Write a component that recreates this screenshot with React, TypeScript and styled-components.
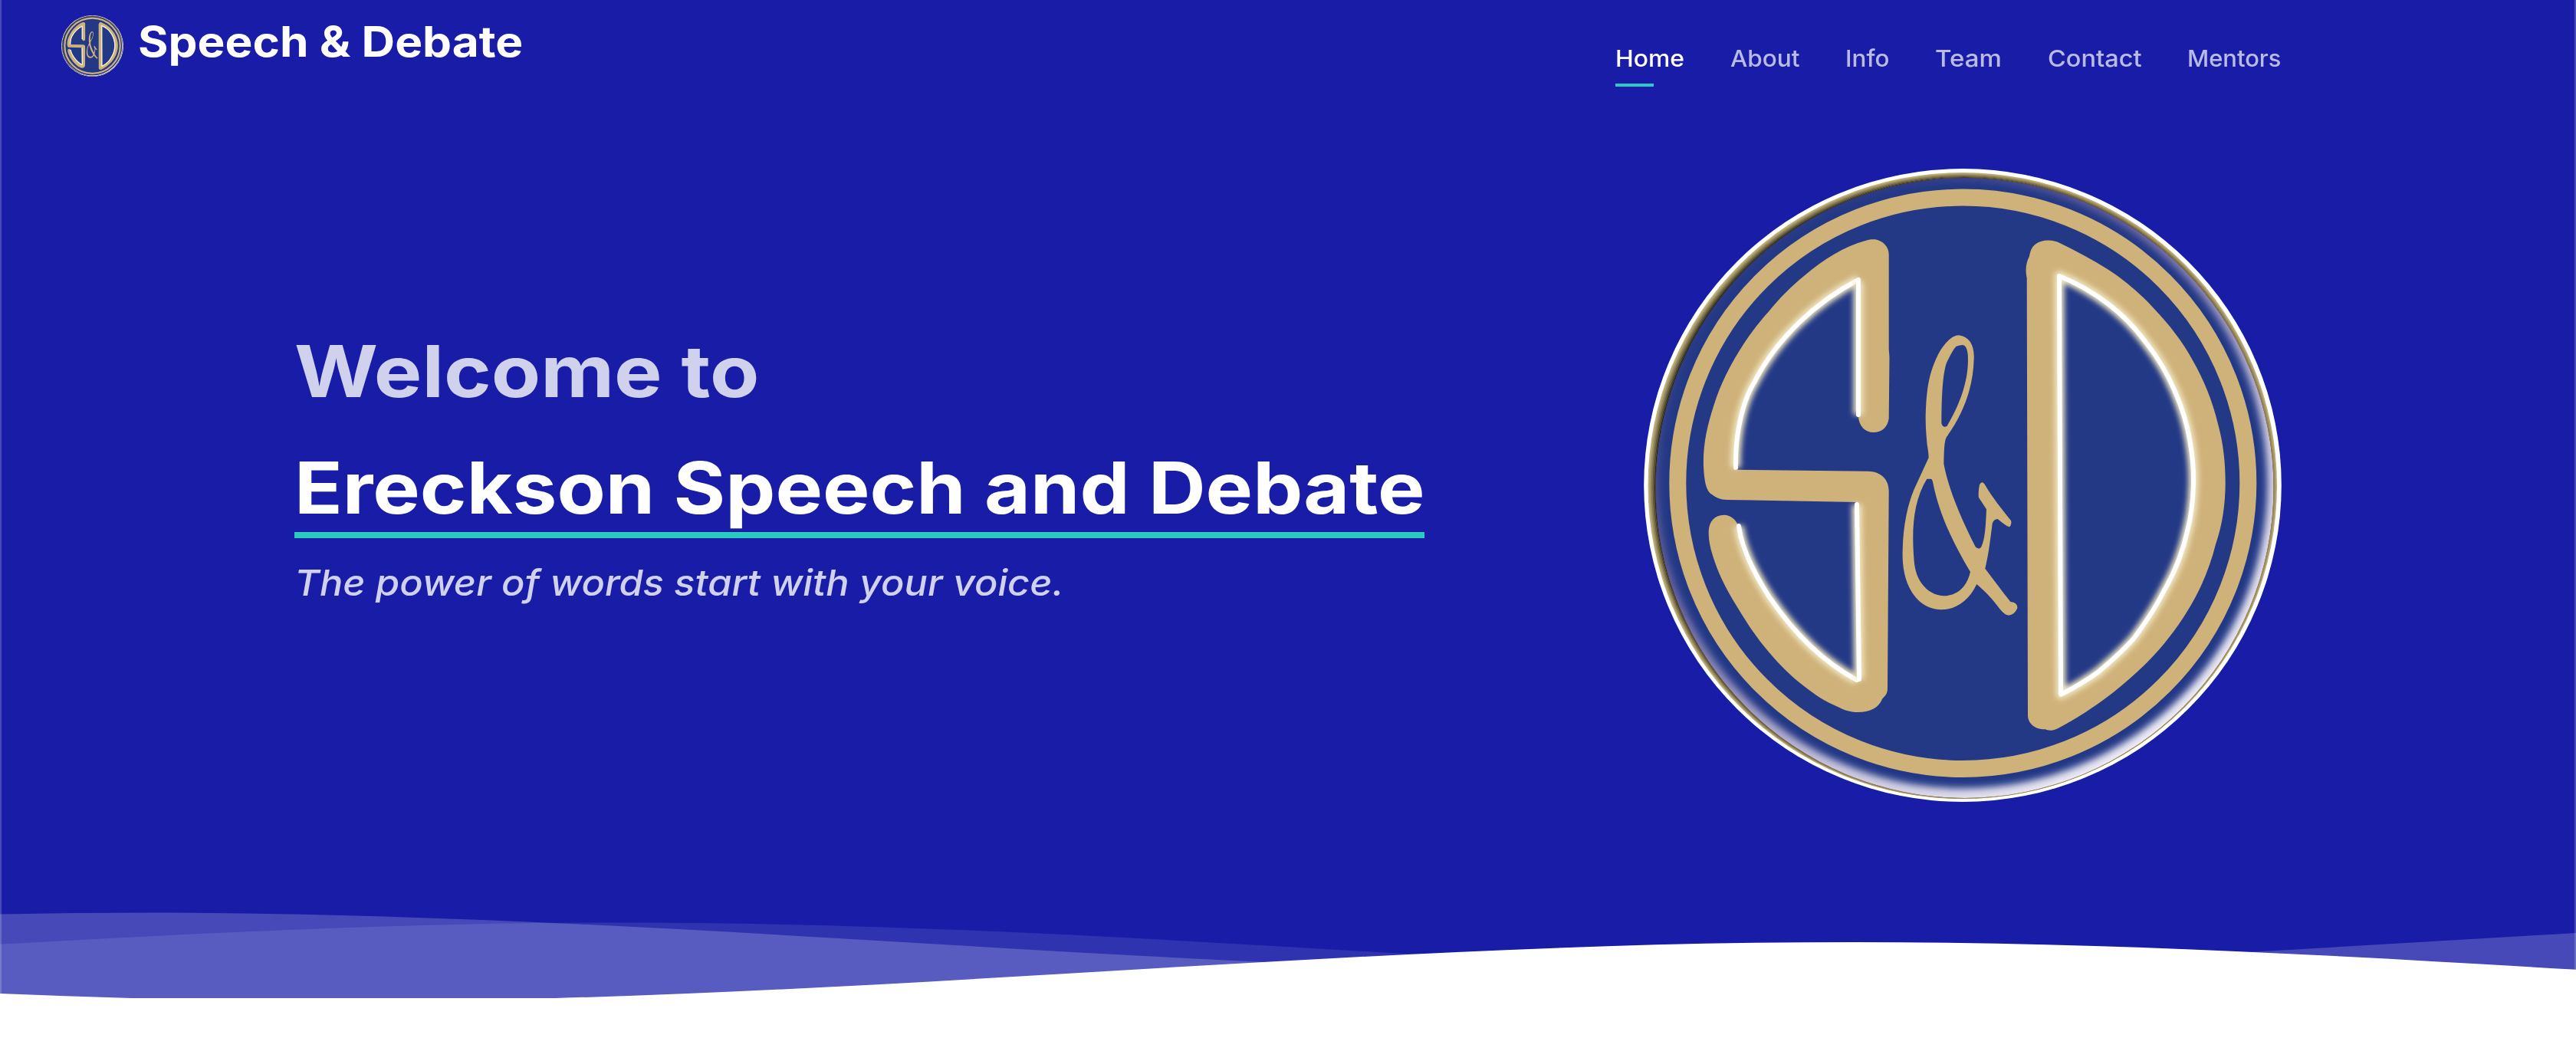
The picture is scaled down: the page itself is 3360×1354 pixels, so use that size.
import React from "react";
import styled, { createGlobalStyle } from "styled-components";

const GlobalStyle = createGlobalStyle`
  * { box-sizing: border-box; }
  body { margin: 0; background: #fff; font-family: Inter, "Open Sans", sans-serif; }
`;

const Page = styled.div`
  width: 3360px;
  height: 1354px;
  overflow: hidden;
  background: #fff;
`;

const Hero = styled.section`
  position: relative;
  display: flex;
  flex-direction: column;
  height: 1302px;
  background: #181ca6;

  &::after {
    content: "";
    position: absolute;
    inset: 0;
    border: 0 solid rgba(255, 255, 255, 0.2);
    border-width: 0 2px;
    pointer-events: none;
  }
`;

const Header = styled.header`
  display: flex;
  justify-content: space-between;
  align-items: flex-start;
  height: 140px;
  padding: 20px 385px 0 80px;
`;

const Brand = styled.a`
  display: flex;
  align-items: flex-start;
  gap: 19px;
  color: #fff;
`;

const Wide = styled.span<{ $stretch: number }>`
  display: inline-block;
  white-space: nowrap;
  transform: scaleX(${(p) => p.$stretch});
  transform-origin: left center;
`;

const BrandName = styled.span`
  font-size: 55px;
  font-weight: 700;
  line-height: 68px;
`;

const Nav = styled.nav`
  display: flex;
  gap: 60px;
  padding-top: 36px;
`;

const NavLink = styled.a<{ $width: number; $active?: boolean }>`
  width: ${(p) => p.$width}px;
  font-size: 30px;
  font-weight: 500;
  line-height: 40px;
  color: ${(p) => (p.$active ? "#fff" : "rgba(255, 255, 255, 0.7)")};

  &::after {
    content: "";
    display: block;
    width: 50px;
    height: 4px;
    margin-top: 13px;
    background: ${(p) => (p.$active ? "#2bcbbf" : "transparent")};
  }
`;

const Main = styled.main`
  flex: 1;
  display: flex;
  justify-content: space-between;
  align-items: flex-start;
  padding: 80px 384px 0;
`;

const Copy = styled.div`
  display: flex;
  flex-direction: column;
  align-items: flex-start;
  padding-top: 208px;
`;

const Title = styled.h1`
  display: flex;
  flex-direction: column;
  align-items: flex-start;
  gap: 40px;
  margin: 0;
  font-size: 93px;
  font-weight: 700;
  line-height: 112px;
  color: rgba(255, 255, 255, 0.8);
`;

const Underlined = styled.span`
  width: 1474px;
  padding-bottom: 2px;
  border-bottom: 8px solid #2bcbbf;
  color: #fff;
`;

const Tagline = styled.p`
  margin: 28px 0 0;
  font-size: 47px;
  font-weight: 500;
  font-style: italic;
  line-height: 60px;
  color: rgba(255, 255, 255, 0.8);
`;

const Emblem = styled.svg<{ $w: number; $h: number }>`
  display: block;
  flex: none;
  width: ${(p) => p.$w}px;
  height: ${(p) => p.$h}px;
`;

const Waves = styled.svg`
  display: block;
  width: 100%;
  height: 120px;
`;

const GOLD = "#cfb27a";
const NAVY = "#233985";

const S_PATH =
  "M2424 543 V363 C2424 361 2428 360 2426 363 C2412 370 2400 378 2386.7 388 C2368 402 2350 420 2333 440 C2315 460 2300 478 2286.7 500 C2278 517 2270 535 2266.7 553 C2262 575 2261 593 2262 611.7 L2267 612.7 L2436.7 614.7 C2452 615 2463.5 624 2463.7 640 L2462 898 C2462 906 2458 908 2455 912 C2450 924 2438 929 2424 929 C2412 929 2405 926 2396.7 921.7 C2380 915 2367 906 2353 895 C2336 882 2321 867 2306.7 850 C2291 832 2279 813 2266.7 793 C2254 773 2243 752 2236.7 733 C2231 716 2228.5 706 2228.7 693 C2229 680 2237 671.7 2248.7 671.7 C2258 672 2264 678 2267 685 C2267 697 2269 709 2273 720 C2282 741 2293 761 2306.7 780 C2321 801 2335 818 2353 835 C2364 846 2375 856 2386.7 865 L2421 887.7 L2424 886 L2421.7 655 L2253 652 C2244 652 2238 649 2233 645 C2226 641 2223 630 2222 608 C2221 580 2227 555 2235 530 C2242 507 2251 488 2263 467 C2276 445 2290 425 2306.7 406.7 C2321 389 2336 374 2353 360 C2380 337 2405 322 2433 314 C2438 312 2442 312 2446 312.3 C2456 314 2463.7 322 2463.7 331.7 V456 L2464.5 466 L2463.7 546 C2462 557 2455 564 2443.5 564 C2433 564 2424.5 556 2424 543 Z";

const D_OUTER =
  "M2643.7 363 C2641.5 352 2642.5 343 2646.7 335 C2648.5 327 2650 322 2655 318.5 C2663 312 2678 312 2686.7 317 C2709 328 2730 339 2750 351.7 C2772 366 2792 383 2810 403 C2830 424 2847 446 2860 470 C2875 496 2886 524 2893 553 C2900 578 2902.7 604 2902.7 630 C2902.5 658 2899 684 2890 710 C2884 734 2875 758 2863 780 C2850 804 2834 827 2816.7 846.7 C2799 867 2778 886 2756.7 903 C2732 922 2708 938 2683 950.7 C2678 953 2672 953.5 2668 951.3 C2655 952 2645 944 2645 933 Z";
const D_INNER =
  "M2686 360 C2708 369 2731 382 2750 396.7 C2769 411 2786 429 2800 448 C2815 467 2827 487 2836.7 510 C2846 531 2853 554 2856.7 576.7 C2860 596 2861.5 614 2861 632 C2860.5 653 2858 674 2853 693 C2847 720 2837 746 2823 770 C2812 792 2798 813 2783 833 C2769 849 2753 863 2736.7 876.7 C2721 888 2706 897 2688 905.7 Z";

const AMPERSAND =
  "M270 37 C310 42 332 75 329 130 C326 240 290 340 222 435 C212 450 212 500 211 540 C230 640 275 745 335 865 Q350 878 358 865 C372 835 375 790 378 718 L348 672 Q345 650 351 622 Q360 605 371 620 C400 670 440 720 474 762 Q478 775 470 786 Q462 790 422 756 Q405 757 401 775 C392 850 385 900 373 950 C400 985 440 1040 472 1080 Q500 1082 499 1105 Q488 1132 465 1133 Q450 1132 432 1110 C405 1075 385 1050 340 1011 C310 1075 260 1111 200 1111 C110 1108 45 1020 50 880 C52 780 70 700 95 640 L152 516 Q152 500 146 465 C142 420 140 400 140 350 C143 240 155 180 190 110 C215 65 245 37 270 37 Z " +
  "M285 75 Q300 75 305 110 C310 180 295 270 224 392 Q208 402 202 382 C202 270 207 190 222 145 Q245 95 260 80 Q275 76 285 75 Z " +
  "M145 599 H162 Q167 602 170 620 C190 720 235 830 315 963 C300 1030 255 1057 210 1057 C140 1052 100 990 95 920 C85 800 90 690 145 599 Z";

const HIGHLIGHTS = [
  "M2264 610 C2263 560 2275 520 2288 499 C2318 440 2370 393 2424 365",
  "M2424 368 V541",
  "M2268 686 C2271 712 2286 745 2308 779 C2336 820 2375 862 2422 887",
  "M2422 658 L2425 886",
  D_INNER,
];

const RIM_STEPS = 8;

function Logo({ id, w, h }: { id: string; w: number; h: number }) {
  const rims = Array.from({ length: RIM_STEPS }, (_, i) => {
    const t = i / (RIM_STEPS - 1);
    const left = 2149.5 + 10 * t;
    const right = 2970 - 4 * t;
    const top = 225 + 7 * t;
    const bottom = 1042 - 1 * t;
    return {
      t,
      cx: (left + right) / 2,
      cy: (top + bottom) / 2,
      rx: (right - left) / 2,
      ry: (bottom - top) / 2,
    };
  });
  return (
    <Emblem $w={w} $h={h} viewBox="2144 220 832 826" preserveAspectRatio="none" aria-hidden="true">
      <defs>
        <linearGradient id={`${id}-shade`} x1="0.05" y1="0.25" x2="0.95" y2="0.75">
          <stop offset="0" stopColor="#080600" />
          <stop offset="0.35" stopColor="#3a2c14" />
          <stop offset="1" stopColor="#8a7448" />
        </linearGradient>
        <linearGradient id={`${id}-sheen`} x1="0.15" y1="0.2" x2="0.75" y2="0.95">
          <stop offset="0" stopColor="#2f3c86" />
          <stop offset="0.3" stopColor="#6a64a0" />
          <stop offset="0.7" stopColor="#cbc6de" />
          <stop offset="1" stopColor="#eeecf5" />
        </linearGradient>
        <clipPath id={`${id}-face`}>
          <ellipse cx="2562.5" cy="636.5" rx="403" ry="404.5" />
        </clipPath>
        <filter id={`${id}-soft`} x="-10%" y="-10%" width="120%" height="120%">
          <feGaussianBlur stdDeviation="5" />
        </filter>
        <filter id={`${id}-glow`} filterUnits="userSpaceOnUse" x="2144" y="220" width="832" height="826">
          <feGaussianBlur stdDeviation="3.6" />
        </filter>
      </defs>
      <ellipse cx="2560" cy="633" rx="415.8" ry="413" fill="#fff" />
      {rims.map((r) => (
        <g key={r.t}>
          <ellipse cx={r.cx} cy={r.cy} rx={r.rx} ry={r.ry} fill="#c0b27c" />
          <ellipse
            cx={r.cx}
            cy={r.cy}
            rx={r.rx}
            ry={r.ry}
            fill={`url(#${id}-shade)`}
            opacity={Math.pow(r.t, 1.2)}
          />
        </g>
      ))}
      <g clipPath={`url(#${id}-face)`}>
        <ellipse cx="2562.5" cy="636.5" rx="403" ry="404.5" fill={`url(#${id}-sheen)`} />
        <ellipse cx="2560.5" cy="632.5" rx="397" ry="396" fill={NAVY} filter={`url(#${id}-soft)`} />
      </g>
      <ellipse cx="2560.3" cy="630.3" rx="372" ry="372.7" fill={NAVY} stroke={GOLD} strokeWidth="22" />
      <path d={S_PATH} fill={GOLD} />
      <path d={D_OUTER} fill={GOLD} />
      <path d={D_INNER} fill={NAVY} />
      <g transform="translate(2465 425) scale(0.33333)">
        <path d={AMPERSAND} fill={GOLD} fillRule="evenodd" />
      </g>
      <g fill="none" strokeLinejoin="round">
        {HIGHLIGHTS.map((d) => (
          <g key={d}>
            <path d={d} stroke="#f1e6c2" strokeWidth="13" filter={`url(#${id}-glow)`} />
            <path d={d} stroke="#fff" strokeWidth="6" strokeLinecap="round" />
          </g>
        ))}
      </g>
    </Emblem>
  );
}

const LINKS = [
  { label: "Home", width: 90, stretch: 1.063 },
  { label: "About", width: 90, stretch: 1.05 },
  { label: "Info", width: 57, stretch: 1.045 },
  { label: "Team", width: 87, stretch: 1.102 },
  { label: "Contact", width: 122, stretch: 1.083 },
  { label: "Mentors", width: 122, stretch: 1.03 },
];

const WAVE =
  "M-160 44c30 0 58-18 88-18s58 18 88 18 58-18 88-18 58 18 88 18v44h-352z";

export default function App() {
  return (
    <Page>
      <GlobalStyle />
      <Hero>
        <Header>
          <Brand>
            <Logo id="brand" w={81} h={80} />
            <BrandName>
              <Wide $stretch={1.097}>Speech &amp; Debate</Wide>
            </BrandName>
          </Brand>
          <Nav>
            {LINKS.map((l, i) => (
              <NavLink key={l.label} $width={l.width} $active={i === 0}>
                <Wide $stretch={l.stretch}>{l.label}</Wide>
              </NavLink>
            ))}
          </Nav>
        </Header>
        <Main>
          <Copy>
            <Title>
              <Wide $stretch={1.13}>Welcome to</Wide>
              <Underlined>
                <Wide $stretch={1.111}>Ereckson Speech and Debate</Wide>
              </Underlined>
            </Title>
            <Tagline>
              <Wide $stretch={1.073}>The power of words start with your voice.</Wide>
            </Tagline>
          </Copy>
          <Logo id="hero" w={832} h={826} />
        </Main>
        <Waves viewBox="0 24 150 28" preserveAspectRatio="none">
          <path d={WAVE} transform="translate(108.3 3)" fill="rgba(255,255,255,0.1)" />
          <path d={WAVE} transform="translate(80.7 0)" fill="rgba(255,255,255,0.2)" />
          <path d={WAVE} transform="translate(4 8.94)" fill="#fff" />
        </Waves>
      </Hero>
    </Page>
  );
}
